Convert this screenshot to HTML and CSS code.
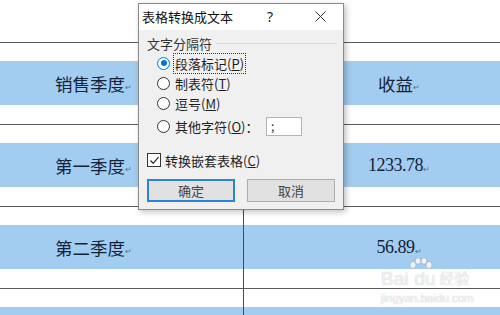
FILE: index.html
```html
<!DOCTYPE html>
<html lang="zh-CN">
<head>
    <meta charset="UTF-8">
    <title>表格转换成文本</title>
    <link rel="stylesheet" href="styles.css">
</head>
<body>
    <div class="page">
        <div class="top-gap"></div>
        <div class="row">
            <div class="cell left"><div class="fill"><span class="cn">销售季度</span><span class="mark">↵</span></div></div>
            <div class="cell right"><div class="fill"><span class="cn">收益</span><span class="mark">↵</span></div></div>
        </div>
        <div class="row">
            <div class="cell left"><div class="fill"><span class="cn">第一季度</span><span class="mark">↵</span></div></div>
            <div class="cell right"><div class="fill"><span class="num">1233.78</span><span class="mark">↵</span></div></div>
        </div>
        <div class="row">
            <div class="cell left"><div class="fill"><span class="cn">第二季度</span><span class="mark">↵</span></div></div>
            <div class="cell right"><div class="fill"><span class="num">56.89</span><span class="mark">↵</span></div></div>
        </div>
        <div class="row last">
            <div class="cell left"><div class="fill"></div></div>
            <div class="cell right"><div class="fill"></div></div>
        </div>
    </div>

    <div class="watermark">
        <div class="wm-top">
            <span>Bai</span>
            <svg class="paw" width="26" height="18" viewBox="0 0 26 18">
                <ellipse cx="5" cy="7" rx="3" ry="3.6" />
                <ellipse cx="10" cy="3" rx="3" ry="3.2" />
                <ellipse cx="16" cy="3" rx="3" ry="3.2" />
                <ellipse cx="21" cy="7" rx="3" ry="3.6" />
            </svg>
            <span class="du">du</span>
            <span class="jy">经验</span>
        </div>
        <div class="wm-url">jingyan.baidu.com</div>
    </div>

    <div class="dialog">
        <div class="titlebar">
            <span class="title">表格转换成文本</span>
            <span class="help">?</span>
            <span class="close">
                <svg width="11" height="11" viewBox="0 0 11 11">
                    <path d="M0.5 0.5 L10.5 10.5 M10.5 0.5 L0.5 10.5" stroke="#333" stroke-width="1" fill="none" />
                </svg>
            </span>
        </div>
        <div class="dlg-body">
            <div class="group-head">
                <span>文字分隔符</span>
                <span class="group-line"></span>
            </div>
            <div class="opt">
                <span class="radio on"></span>
                <span class="focus">段落标记(<u>P</u>)</span>
            </div>
            <div class="opt">
                <span class="radio"></span>
                <span>制表符(<u>T</u>)</span>
            </div>
            <div class="opt">
                <span class="radio"></span>
                <span>逗号(<u>M</u>)</span>
            </div>
            <div class="opt other">
                <span class="radio"></span>
                <span class="other-label">其他字符(<u>O</u>)：</span>
                <span class="field">;</span>
            </div>
            <div class="check-row">
                <span class="checkbox">
                    <svg width="11" height="11" viewBox="0 0 11 11">
                        <path d="M1.5 5.5 L4.2 8.3 L9.5 2.2" stroke="#222" stroke-width="1.2" fill="none" />
                    </svg>
                </span>
                <span>转换嵌套表格(<u>C</u>)</span>
            </div>
            <div class="buttons">
                <button class="btn default">确定</button>
                <button class="btn">取消</button>
            </div>
        </div>
    </div>
</body>
</html>
```

FILE: styles.css
```css
html {
    overflow: hidden;
}

body {
    margin: 0;
    background-color: #fff;
    font-family: "Noto Sans CJK SC", sans-serif;
    position: relative;
    width: 500px;
    height: 315px;
    overflow: hidden;
}

.top-gap {
    height: 42px;
}

.row {
    display: grid;
    grid-template-columns: 244px 1fr;
    border-top: 1px solid #5a5a5a;
}

.cell {
    padding: 18px 0 19px;
}

.cell.left {
    border-right: 1px solid #4a4a4a;
}

.fill {
    height: 44px;
    background-color: #a3cdf0;
    display: flex;
    align-items: center;
    justify-content: center;
    color: #13233a;
}

.row.last .cell {
    padding-bottom: 0;
}

.row.last .fill {
    height: 8px;
}

.left .fill {
    padding-right: 56px;
}

.right .fill {
    padding-left: 54px;
}

.cn {
    font-size: 17.5px;
}

.num {
    font-family: "Liberation Serif", serif;
    font-size: 18px;
    letter-spacing: -0.5px;
}

.mark {
    font-size: 8px;
    color: #5a6f88;
    margin-top: 6px;
}

/* dialog */
.dialog {
    position: absolute;
    left: 138px;
    top: 3px;
    width: 204px;
    border: 1px solid #8a8a8a;
    background-color: #f0f0f0;
    box-shadow: 2px 2px 6px rgba(0, 0, 0, 0.25);
    color: #1e1e1e;
}

.titlebar {
    height: 26px;
    background-color: #fff;
    display: flex;
    align-items: center;
    padding-bottom: 1px;
    box-sizing: border-box;
}

.title {
    flex: 1;
    font-size: 13px;
    padding-left: 3px;
    color: #111;
}

.help {
    width: 20px;
    text-align: center;
    font-size: 14px;
    margin-right: 17px;
    font-family: "Noto Sans", sans-serif;
    color: #222;
}

.close {
    width: 46px;
    display: flex;
    justify-content: center;
}

.dlg-body {
    padding: 6px 0 7px 8px;
    font-size: 13px;
}

.group-head {
    height: 14px;
    display: flex;
    align-items: center;
    color: #333;
    margin-bottom: 3px;
}

.group-line {
    flex: 1;
    height: 1px;
    background-color: #d8d8d8;
    margin: 0 6px 0 4px;
}

.opt {
    height: 20px;
    display: flex;
    align-items: center;
    padding-left: 10px;
}

.opt.other {
    margin-top: 3px;
}

.radio {
    width: 13px;
    height: 13px;
    box-sizing: border-box;
    border: 1px solid #333;
    border-radius: 50%;
    background-color: #fff;
    margin-right: 5px;
    display: flex;
    align-items: center;
    justify-content: center;
}

.radio.on {
    border-color: #0078d7;
}

.radio.on::after {
    content: "";
    width: 6px;
    height: 6px;
    border-radius: 50%;
    background-color: #0078d7;
}

.focus {
    outline: 1px dotted #333;
    outline-offset: 0;
    padding: 0 1px;
    margin-left: -1px;
}

.other-label {
    width: 91px;
}

.field {
    width: 36px;
    height: 19px;
    box-sizing: border-box;
    border: 1px solid #b4b4b4;
    background-color: #fff;
    font-size: 12px;
    line-height: 16px;
    padding-left: 4px;
}

.check-row {
    height: 20px;
    margin-top: 14px;
    display: flex;
    align-items: center;
}

.checkbox {
    width: 14px;
    height: 14px;
    box-sizing: border-box;
    border: 1px solid #333;
    background-color: #fff;
    margin-right: 4px;
    display: flex;
    align-items: center;
    justify-content: center;
}

.buttons {
    margin-top: 9px;
    display: flex;
    gap: 12px;
}

.btn {
    width: 88px;
    height: 23px;
    box-sizing: border-box;
    border: 1px solid #adadad;
    background-color: #e1e1e1;
    font-family: "Noto Sans CJK SC", sans-serif;
    font-size: 13px;
    color: #444;
    padding: 0;
}

.btn.default {
    border: 2px solid #2b84d8;
}

/* watermark */
.watermark {
    position: absolute;
    left: 381px;
    top: 258px;
    color: rgba(255, 255, 255, 0.75);
    text-shadow: 0 0 1px rgba(120, 120, 120, 0.5);
    font-family: "Liberation Sans", sans-serif;
}

.wm-top {
    display: flex;
    align-items: flex-end;
    font-size: 19px;
    height: 32px;
}

.paw {
    fill: rgba(255, 255, 255, 0.75);
    stroke: rgba(150, 150, 150, 0.5);
    margin: 0 -26px 14px 0;
}

.du {
    margin-left: 6px;
}

.jy {
    font-family: "Noto Sans CJK SC", sans-serif;
    font-size: 15px;
    margin-left: 4px;
    margin-bottom: 2px;
}

.wm-url {
    font-size: 11.5px;
    margin-top: 2px;
}
```
